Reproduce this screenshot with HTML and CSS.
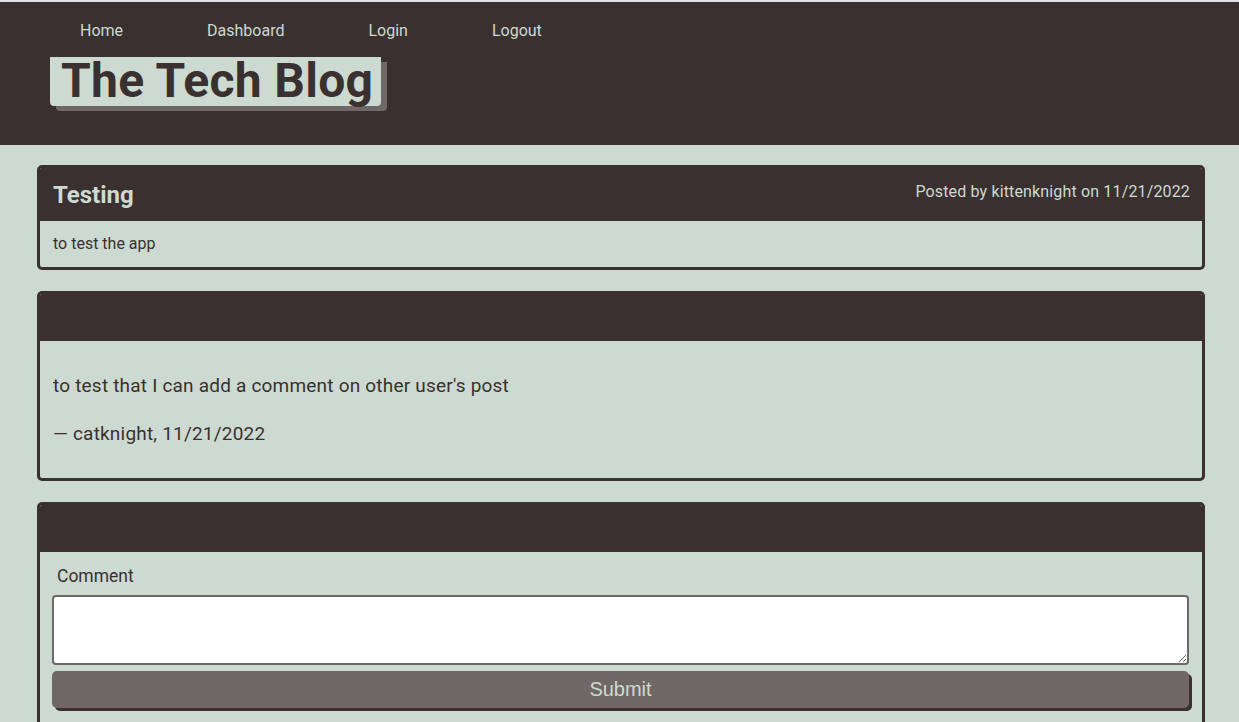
FILE: index.html
```html
<!DOCTYPE html>
<html lang="en">
<head>
<meta charset="utf-8">
<title>The Tech Blog</title>
<link rel="stylesheet" href="styles.css">
</head>
<body>
<header class="site-header">
  <nav class="nav">
    <a class="nav-link" href="#">Home</a>
    <a class="nav-link" href="#">Dashboard</a>
    <a class="nav-link" href="#">Login</a>
    <a class="nav-link" href="#">Logout</a>
  </nav>
  <h1 class="site-title">The Tech Blog</h1>
</header>
<main class="main">
  <section class="card">
    <div class="card-head">
      <h2 class="post-title">Testing</h2>
      <p class="post-meta">Posted by kittenknight on 11/21/2022</p>
    </div>
    <div class="card-body post-body">to test the app</div>
  </section>
  <section class="card">
    <div class="card-head empty"></div>
    <div class="card-body comment-body">
      <p class="comment-text">to test that I can add a comment on other user's post</p>
      <p class="comment-text">— catknight, 11/21/2022</p>
    </div>
  </section>
  <section class="card">
    <div class="card-head empty"></div>
    <form class="card-body comment-form">
      <label class="form-label" for="comment">Comment</label>
      <textarea class="form-input" id="comment"></textarea>
      <button class="submit-btn" type="button">Submit</button>
    </form>
  </section>
</main>
</body>
</html>
```
FILE: styles.css
```css
* { box-sizing: border-box; }
html, body { margin: 0; padding: 0; }
body {
  background: #ccdad1;
  color: #3a302f;
  font-family: Roboto, "Noto Sans", "Liberation Sans", sans-serif;
  border-top: 2px solid #e2e2e2;
  height: 722px;
  overflow: hidden;
}
.site-header {
  background: #3a302f;
  height: 143px;
  display: flex;
  flex-direction: column;
  align-items: flex-start;
  padding: 0 0 0 50px;
}
.nav {
  display: flex;
  gap: 84px;
  padding: 19px 0 0 30px;
  height: 55px;
}
.nav-link {
  color: #ccdad1;
  text-decoration: none;
  font-size: 16px;
  line-height: 20px;
}
.site-title {
  margin: 0;
  background: #ccdad1;
  color: #3a302f;
  font-size: 48px;
  font-weight: 700;
  line-height: 47px;
  padding: 0 8px 0 11px;
  height: 49px;
  border-radius: 0 0 4px 4px;
  box-shadow: 6px 5px 0 #706866;
  letter-spacing: 0.3px;
}
.main {
  padding: 20px 34px 0 37px;
  display: flex;
  flex-direction: column;
  gap: 21px;
}
.card {
  border: 3px solid #3a302f;
  border-radius: 5px;
  overflow: hidden;
}
.card-head {
  background: #3a302f;
  color: #ccdad1;
  display: flex;
  justify-content: space-between;
  align-items: center;
  height: 53px;
  padding: 0 12px 0 13px;
}
.card-head.empty { height: 47px; }
.post-title {
  margin: 0;
  font-size: 24px;
  font-weight: 700;
}
.post-meta {
  margin: 0 0 6px;
  font-size: 16px;
  letter-spacing: 0.15px;
}
.card-body { padding: 12px 13px; }
.post-body {
  font-size: 16px;
  line-height: 22px;
  height: 46px;
}
.comment-body { padding: 12px 13px 11px; }
.comment-text {
  margin: 18px 0;
  font-size: 19px;
  line-height: 30px;
  letter-spacing: 0.2px;
}
.comment-form {
  display: flex;
  flex-direction: column;
  padding: 13px 13px 30px 12px;
}
.form-label {
  font-size: 17.5px;
  line-height: 22px;
  padding-left: 5px;
  margin-bottom: 8px;
}
.form-input {
  height: 70px;
  border: 2px solid #706866;
  border-radius: 4px;
  background: #fff;
  margin: 0 0 6px;
  resize: vertical;
  font: inherit;
}
.submit-btn {
  height: 37px;
  background: #706866;
  color: #ccdad1;
  border: none;
  border-radius: 5px;
  box-shadow: 3px 3px 0 #3a302f;
  font-family: "Liberation Sans", Arial, sans-serif;
  font-size: 20px;
  cursor: pointer;
}
```
